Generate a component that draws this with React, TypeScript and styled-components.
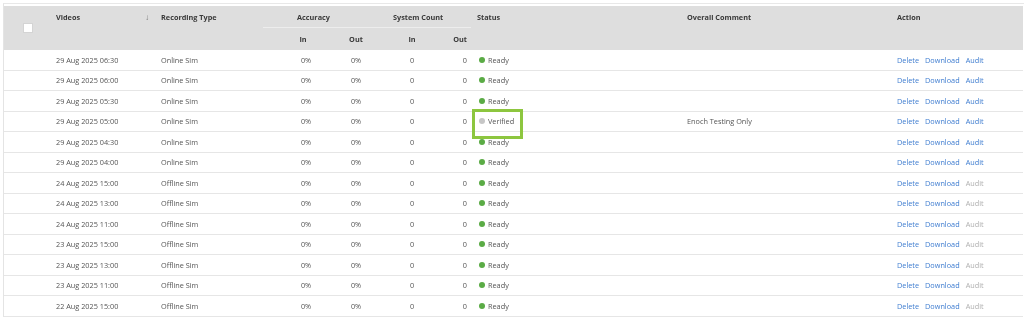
import styled, { createGlobalStyle } from "styled-components";

const GlobalStyle = createGlobalStyle`
  body {
    margin: 0;
    background: #ffffff;
    font-family: "Open Sans", "Noto Sans", Arial, sans-serif;
  }
`;

const Frame = styled.div`
  margin: 3px 0 0 3px;
  padding-top: 2px;
  border-top: 1px solid #e8e8e8;
  border-left: 1px solid #e4e4e4;
  will-change: transform;
`;

const Table = styled.table`
  width: 1019px;
  border-collapse: collapse;
  table-layout: fixed;
  font-size: 7.3px;
  color: #555;
`;

const HeadRow = styled.tr<{ $height: number }>`
  height: ${(p) => p.$height}px;
  background: #dedede;
`;

const Th = styled.th<{ $align?: "left" | "center" | "right"; $pad?: string }>`
  padding: ${(p) => p.$pad ?? "1px 0 0 6px"};
  text-align: ${(p) => p.$align ?? "left"};
  vertical-align: top;
  font-weight: 700;
  color: #3a3a3a;
  white-space: nowrap;
  line-height: 20px;
`;

const GroupTh = styled(Th)`
  border-bottom: 1px solid #ededed;
`;

const SubTh = styled(Th)`
  line-height: 20px;
`;

const CheckTh = styled.th`
  vertical-align: middle;
  text-align: left;
  padding: 0 0 0 19px;
`;

const CheckBox = styled.span`
  display: block;
  width: 10px;
  height: 10px;
  background: #ffffff;
  border: 1px solid #d4d4d4;
  box-sizing: border-box;
`;

const SortHead = styled.div`
  display: flex;
  justify-content: space-between;
  padding-right: 6px;
`;

const SortArrow = styled.span`
  font-weight: 400;
  color: #777;
  font-size: 8px;
`;

const Row = styled.tr`
  height: 20.5px;
`;

const Td = styled.td<{ $align?: "left" | "center" | "right"; $pad?: string }>`
  padding: ${(p) => p.$pad ?? "0 0 0 6px"};
  text-align: ${(p) => p.$align ?? "left"};
  border-bottom: 1px solid #e6e6e6;
  white-space: nowrap;
  vertical-align: middle;
`;

const StatusCell = styled(Td)`
  position: relative;
`;

const Status = styled.span`
  display: inline-flex;
  align-items: center;
  gap: 3px;
`;

const Dot = styled.span<{ $color: string }>`
  width: 6px;
  height: 6px;
  border-radius: 50%;
  background: ${(p) => p.$color};
`;

const Highlight = styled.span`
  position: absolute;
  left: 1px;
  top: -3px;
  width: 51px;
  height: 30px;
  box-sizing: border-box;
  border: 3px solid #8dc63f;
`;

const Link = styled.a<{ $disabled?: boolean }>`
  color: ${(p) => (p.$disabled ? "#b0b0b0" : "#3f7dd0")};
  text-decoration: none;
  margin-right: 6px;
  cursor: pointer;
`;

type Item = {
  time: string;
  type: string;
  verified?: boolean;
  comment?: string;
  audit: boolean;
};

const rows: Item[] = [
  { time: "29 Aug 2025 06:30", type: "Online Sim", audit: true },
  { time: "29 Aug 2025 06:00", type: "Online Sim", audit: true },
  { time: "29 Aug 2025 05:30", type: "Online Sim", audit: true },
  {
    time: "29 Aug 2025 05:00",
    type: "Online Sim",
    verified: true,
    comment: "Enoch Testing Only",
    audit: true,
  },
  { time: "29 Aug 2025 04:30", type: "Online Sim", audit: true },
  { time: "29 Aug 2025 04:00", type: "Online Sim", audit: true },
  { time: "24 Aug 2025 15:00", type: "Offline Sim", audit: false },
  { time: "24 Aug 2025 13:00", type: "Offline Sim", audit: false },
  { time: "24 Aug 2025 11:00", type: "Offline Sim", audit: false },
  { time: "23 Aug 2025 15:00", type: "Offline Sim", audit: false },
  { time: "23 Aug 2025 13:00", type: "Offline Sim", audit: false },
  { time: "23 Aug 2025 11:00", type: "Offline Sim", audit: false },
  { time: "22 Aug 2025 15:00", type: "Offline Sim", audit: false },
];

export default function App() {
  return (
    <>
      <GlobalStyle />
      <Frame>
        <Table>
          <colgroup>
            <col style={{ width: 46 }} />
            <col style={{ width: 105 }} />
            <col style={{ width: 108 }} />
            <col style={{ width: 80 }} />
            <col style={{ width: 26 }} />
            <col style={{ width: 71 }} />
            <col style={{ width: 31 }} />
            <col style={{ width: 210 }} />
            <col style={{ width: 210 }} />
            <col style={{ width: 132 }} />
          </colgroup>
          <thead>
            <HeadRow $height={21}>
              <CheckTh rowSpan={2}>
                <CheckBox />
              </CheckTh>
              <Th rowSpan={2}>
                <SortHead>
                  <span>Videos</span>
                  <SortArrow>↓</SortArrow>
                </SortHead>
              </Th>
              <Th rowSpan={2}>Recording Type</Th>
              <GroupTh colSpan={2} $pad="1px 0 0 34px">
                Accuracy
              </GroupTh>
              <GroupTh colSpan={2} $pad="1px 0 0 24px">
                System Count
              </GroupTh>
              <Th rowSpan={2}>Status</Th>
              <Th rowSpan={2}>Overall Comment</Th>
              <Th rowSpan={2}>Action</Th>
            </HeadRow>
            <HeadRow $height={22}>
              <SubTh $align="center" $pad="1px 0 0 0">
                In
              </SubTh>
              <SubTh $align="center" $pad="1px 0 0 0">
                Out
              </SubTh>
              <SubTh $align="center" $pad="1px 0 0 15px">
                In
              </SubTh>
              <SubTh $align="right" $pad="1px 4px 0 0">
                Out
              </SubTh>
            </HeadRow>
          </thead>
          <tbody>
            {rows.map((r) => (
              <Row key={r.time}>
                <Td />
                <Td>{r.time}</Td>
                <Td>{r.type}</Td>
                <Td $align="center">0%</Td>
                <Td $align="center" $pad="0">
                  0%
                </Td>
                <Td $align="center" $pad="0 0 0 15px">
                  0
                </Td>
                <Td $align="right" $pad="0 4px 0 0">
                  0
                </Td>
                <StatusCell $pad="0 0 0 8px">
                  <Status>
                    <Dot $color={r.verified ? "#c6c6c6" : "#5aab45"} />
                    {r.verified ? "Verified" : "Ready"}
                  </Status>
                  {r.verified && <Highlight />}
                </StatusCell>
                <Td>{r.comment ?? ""}</Td>
                <Td>
                  <Link>Delete</Link>
                  <Link>Download</Link>
                  <Link $disabled={!r.audit}>Audit</Link>
                </Td>
              </Row>
            ))}
          </tbody>
        </Table>
      </Frame>
    </>
  );
}
